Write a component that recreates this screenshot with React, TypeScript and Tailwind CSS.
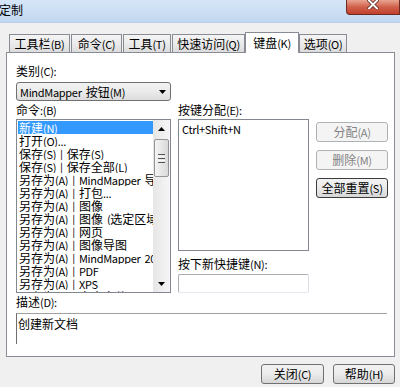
import React from "react";

const items = [
  "新建(N)",
  "打开(O)...",
  "保存(S) | 保存(S)",
  "保存(S) | 保存全部(L)",
  "另存为(A) | MindMapper 导出",
  "另存为(A) | 打包...",
  "另存为(A) | 图像",
  "另存为(A) | 图像 (选定区域)",
  "另存为(A) | 网页",
  "另存为(A) | 图像导图",
  "另存为(A) | MindMapper 2010",
  "另存为(A) | PDF",
  "另存为(A) | XPS",
  "另存为(A) | 文本文件",
];

function Latin({ s }: { s: string }) {
  const bits = s.split(/( )/);
  return (
    <>
      {bits.map((b, j) =>
        b === " " ? (
          <span key={j} className="inline-block w-[4px]" />
        ) : b.length ? (
          <span key={j} className="text-[11px] tracking-[-0.3px]">
            {b}
          </span>
        ) : null
      )}
    </>
  );
}

function T({ s }: { s: string }) {
  const parts = s.split(/([\u3000-\u9fff\uff00-\uffef]+)/).filter((p) => p.length > 0);
  return (
    <>
      {parts.map((p, i) =>
        /[\u3000-\u9fff\uff00-\uffef]/.test(p) ? <span key={i}>{p}</span> : <Latin key={i} s={p} />
      )}
    </>
  );
}

function Tab({ label, w, selected, ml }: { label: string; w: string; selected?: boolean; ml?: string }) {
  if (selected) {
    return (
      <div
        className={`relative z-10 h-[21px] ${w} ${ml ?? ""} border border-b-0 border-[#898c95] bg-white flex items-start justify-center pt-[2px] leading-[16px]`}
      >
        <T s={label} />
      </div>
    );
  }
  return (
    <div
      className={`h-[18px] mb-[1px] ${w} ${ml ?? ""} border border-b-0 border-[#898c95] bg-gradient-to-b from-[#f4f4f4] via-[#ebebeb] to-[#dcdcdc] flex items-center justify-center leading-[16px]`}
    >
      <T s={label} />
    </div>
  );
}

function Btn({ label, w, disabled, def }: { label: string; w: string; disabled?: boolean; def?: boolean }) {
  if (disabled) {
    return (
      <div className={`h-[20px] ${w} rounded-[3px] border border-[#adb2b5] bg-[#f4f4f4] text-[#838383] flex items-center justify-center leading-[16px]`}>
        <T s={label} />
      </div>
    );
  }
  return (
    <div
      className={`h-[20px] ${w} rounded-[3px] border ${def ? "border-[#3c3c3c]" : "border-[#707070]"} bg-gradient-to-b from-[#f2f2f2] via-[#ebebeb] to-[#d6d6d6] flex items-center justify-center leading-[16px]`}
    >
      <T s={label} />
    </div>
  );
}

export default function App() {
  return (
    <div className="w-[400px] h-[387px] overflow-hidden bg-[#f0f0f0] text-[12px] text-black font-['Noto_Sans_CJK_SC',sans-serif] flex flex-col">
      {/* Title bar */}
      <div className="h-[23px] shrink-0 flex justify-between bg-gradient-to-b from-[#d6e6f8] to-[#c2d8f0] border-b border-[#b9cde6]">
        <div className="ml-[-1px] mt-[2px] leading-[16px] text-[12px]">定制</div>
        <div className="w-[54px] h-[15px] rounded-bl-[4px] border border-t-0 border-[#6d2b21] bg-gradient-to-b from-[#e9a592] via-[#d0604b] to-[#c0402b] flex items-start justify-center">
          <svg width="12" height="9" viewBox="0 0 12 9">
            <path d="M2 0.5 L10 8.5 M10 0.5 L2 8.5" stroke="#5a2a22" strokeWidth="3.6" strokeLinecap="square" />
            <path d="M2 0.5 L10 8.5 M10 0.5 L2 8.5" stroke="#ffffff" strokeWidth="2" strokeLinecap="square" />
          </svg>
        </div>
      </div>

      {/* Tabs row */}
      <div className="h-[30px] -mb-[1px] flex items-end shrink-0">
        <Tab label="工具栏(B)" w="w-[61px]" ml="ml-[9px]" />
        <Tab label="命令(C)" w="w-[51px]" ml="ml-[1px]" />
        <Tab label="工具(T)" w="w-[48px]" ml="ml-[1px]" />
        <Tab label="快速访问(Q)" w="w-[73px]" ml="ml-[1px]" />
        <Tab label="键盘(K)" w="w-[54px]" selected />
        <Tab label="选项(O)" w="w-[48px]" />
      </div>

      {/* Panel */}
      <div className="ml-[6px] w-[389px] h-[305px] shrink-0 border border-[#898c95] bg-white pl-[9px] pt-[10px] flex flex-col">
        <div className="h-[16px] leading-[16px]">
          <T s="类别(C):" />
        </div>
        <div className="mt-[3px] w-[155px] h-[19px] rounded-[3px] border border-[#707070] bg-gradient-to-b from-[#f2f2f2] via-[#ebebeb] to-[#dcdcdc] flex items-center justify-between pl-[3px] pr-[4px] leading-[16px]">
          <span>
            <T s="MindMapper 按钮(M)" />
          </span>
          <svg width="7" height="4" viewBox="0 0 7 4">
            <path d="M0 0 H7 L3.5 4 Z" fill="#000" />
          </svg>
        </div>

        <div className="flex">
          {/* Commands */}
          <div className="w-[155px] flex flex-col">
            <div className="h-[18px] leading-[18px]">
              <T s="命令:(B)" />
            </div>
            <div className="h-[174px] border border-[#828790] flex overflow-hidden">
              <div className="flex-1 pt-[1px] overflow-hidden">
                {items.map((t, i) => (
                  <div
                    key={i}
                    className={`h-[13px] leading-[13px] ml-[1px] pl-[1px] whitespace-nowrap overflow-hidden ${
                      i === 0 ? "bg-[#3399ff] text-white" : ""
                    }`}
                  >
                    <T s={t} />
                  </div>
                ))}
              </div>
              <div className="w-[17px] shrink-0 bg-gradient-to-r from-[#e6e6e6] to-[#f6f6f6] flex flex-col items-center">
                <div className="h-[17px] w-full flex items-center justify-center">
                  <svg width="7" height="4" viewBox="0 0 7 4">
                    <path d="M0 4 H7 L3.5 0 Z" fill="#000" />
                  </svg>
                </div>
                <div className="mt-[2px] w-[15px] h-[38px] rounded-[2px] border border-[#959595] bg-gradient-to-r from-[#f4f4f4] to-[#d9d9d9] flex flex-col items-center justify-center gap-[1px]">
                  <div className="w-[7px] h-[1px] bg-[#555]" />
                  <div className="w-[7px] h-[1px] bg-[#f8f8f8]" />
                  <div className="w-[7px] h-[1px] bg-[#555]" />
                  <div className="w-[7px] h-[1px] bg-[#f8f8f8]" />
                  <div className="w-[7px] h-[1px] bg-[#555]" />
                </div>
                <div className="flex-1" />
                <div className="h-[17px] w-full flex items-center justify-center">
                  <svg width="7" height="4" viewBox="0 0 7 4">
                    <path d="M0 0 H7 L3.5 4 Z" fill="#000" />
                  </svg>
                </div>
              </div>
            </div>
          </div>

          {/* Keys */}
          <div className="w-[131px] ml-[7px] flex flex-col">
            <div className="h-[18px] leading-[18px]">
              <T s="按键分配(E):" />
            </div>
            <div className="h-[132px] border border-[#828790] pl-[3px] pt-[1px] leading-[16px]">
              <T s="Ctrl+Shift+N" />
            </div>
            <div className="mt-[5px] h-[16px] leading-[16px]">
              <T s="按下新快捷键(N):" />
            </div>
            <div className="mt-[2px] h-[19px] border border-[#abadb3] border-b-[#e3e9ef] border-r-[#dbdfe6] rounded-[2px]" />
          </div>

          {/* Buttons */}
          <div className="w-[72px] ml-[7px] pt-[21px] flex flex-col gap-[8px]">
            <Btn label="分配(A)" w="w-[72px]" disabled />
            <Btn label="删除(M)" w="w-[72px]" disabled />
            <Btn label="全部重置(S)" w="w-[72px]" def />
          </div>
        </div>

        <div className="mt-[1px] h-[16px] leading-[16px]">
          <T s="描述(D):" />
        </div>
        <div className="mt-[3px] w-[371px] h-[31px] border-t border-l border-t-[#a0a0a0] border-l-[#6e6e6e] pl-[1px] pt-[2px] leading-[16px]">
          创建新文档
        </div>
      </div>

      {/* Bottom buttons */}
      <div className="mt-[7px] flex justify-end pr-[5px] gap-[9px]">
        <Btn label="关闭(C)" w="w-[63px]" />
        <Btn label="帮助(H)" w="w-[62px]" />
      </div>
    </div>
  );
}
